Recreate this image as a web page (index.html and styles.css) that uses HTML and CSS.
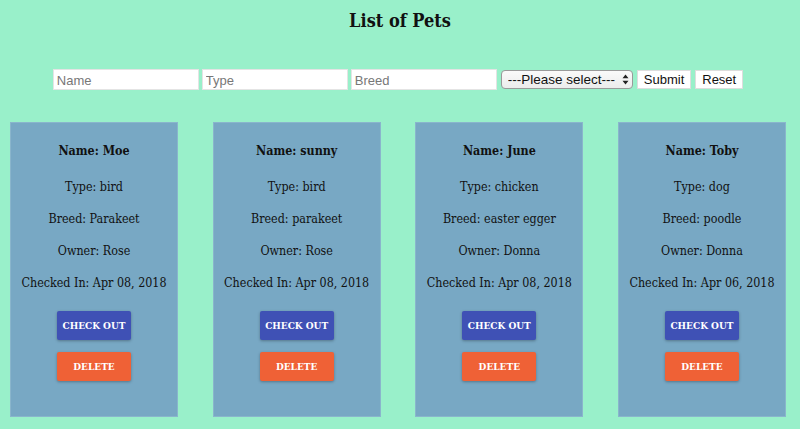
FILE: index.html
```html
<!DOCTYPE html>
<html>
<head>
<meta charset="utf-8">
<link rel="stylesheet" href="styles.css">
</head>
<body>
<h1 class="title">List of Pets</h1>
<form class="pet-form">
  <input class="field" type="text" placeholder="Name">
  <input class="field" type="text" placeholder="Type">
  <input class="field" type="text" placeholder="Breed">
  <span class="select-wrap">
    <select class="owner-select"><option>---Please select---</option></select>
    <svg class="select-arrows" width="7" height="11" viewBox="0 0 7 11"><path d="M3.5 0.5 L6.5 4.2 H0.5 Z M3.5 10.5 L6.5 6.8 H0.5 Z" fill="#222"/></svg>
  </span>
  <button class="form-btn" type="button">Submit</button>
  <button class="form-btn" type="button">Reset</button>
</form>
<div class="cards">
  <div class="card">
    <p class="name">Name: Moe</p>
    <p class="line">Type: bird</p>
    <p class="line">Breed: Parakeet</p>
    <p class="line">Owner: Rose</p>
    <p class="line">Checked In: Apr 08, 2018</p>
    <button class="btn checkout">CHECK OUT</button>
    <button class="btn delete">DELETE</button>
  </div>
  <div class="card">
    <p class="name">Name: sunny</p>
    <p class="line">Type: bird</p>
    <p class="line">Breed: parakeet</p>
    <p class="line">Owner: Rose</p>
    <p class="line">Checked In: Apr 08, 2018</p>
    <button class="btn checkout">CHECK OUT</button>
    <button class="btn delete">DELETE</button>
  </div>
  <div class="card">
    <p class="name">Name: June</p>
    <p class="line">Type: chicken</p>
    <p class="line">Breed: easter egger</p>
    <p class="line">Owner: Donna</p>
    <p class="line">Checked In: Apr 08, 2018</p>
    <button class="btn checkout">CHECK OUT</button>
    <button class="btn delete">DELETE</button>
  </div>
  <div class="card">
    <p class="name">Name: Toby</p>
    <p class="line">Type: dog</p>
    <p class="line">Breed: poodle</p>
    <p class="line">Owner: Donna</p>
    <p class="line">Checked In: Apr 06, 2018</p>
    <button class="btn checkout">CHECK OUT</button>
    <button class="btn delete">DELETE</button>
  </div>
</div>
</body>
</html>
```
FILE: styles.css
```css
html, body {
  margin: 0;
  padding: 0;
  background: #99f0ca;
  font-family: "DejaVu Serif Condensed", "DejaVu Serif", serif;
  color: #111;
}
.title {
  margin: 0;
  padding-top: 10px;
  height: 69px;
  box-sizing: border-box;
  text-align: center;
  font-size: 18px;
  line-height: 22px;
  font-weight: bold;
}
.pet-form {
  display: flex;
  justify-content: center;
  align-items: center;
  gap: 3px;
  height: 21px;
  margin-left: -4px;
  font-family: "Liberation Sans", Arial, sans-serif;
}
.field {
  width: 146px;
  height: 21px;
  box-sizing: border-box;
  border: 1px solid #e4e4e4;
  background: #fff;
  padding: 2px 3px 0;
  font-family: "Liberation Sans", Arial, sans-serif;
  font-size: 13px;
  color: #333;
}
.field::placeholder { color: #777; }
.select-wrap {
  position: relative;
  display: flex;
  margin-left: 1px;
}
.owner-select {
  appearance: none;
  -webkit-appearance: none;
  width: 132px;
  height: 19px;
  box-sizing: border-box;
  border: 1px solid #9a9a9a;
  border-radius: 4px;
  background: linear-gradient(#fafafa, #ececec);
  font-family: "Liberation Sans", Arial, sans-serif;
  font-size: 13.5px;
  color: #111;
  padding: 0 0 0 6px;
}
.select-arrows {
  position: absolute;
  right: 4px;
  top: 4px;
  pointer-events: none;
}
.form-btn {
  height: 19px;
  box-sizing: border-box;
  border: 1px solid #ddd;
  background: #fff;
  font-family: "Liberation Sans", Arial, sans-serif;
  font-size: 13px;
  color: #111;
  padding: 0 6px;
  margin-left: 1px;
}
.cards {
  display: flex;
  justify-content: space-between;
  margin: 32px 14px 0 10px;
}
.card {
  width: 168px;
  height: 295px;
  box-sizing: border-box;
  background: #78a8c4;
  border: 1px solid #8ab5cc;
  display: flex;
  flex-direction: column;
  align-items: center;
  padding-top: 20px;
}
.card p {
  margin: 0;
  font-size: 12.4px;
  line-height: 16px;
  height: 32px;
  white-space: nowrap;
}
.card .name {
  font-weight: bold;
  height: 36px;
}
.btn {
  width: 74px;
  height: 29px;
  border: none;
  border-radius: 2px;
  color: #fff;
  font-family: "DejaVu Serif Condensed", "DejaVu Serif", serif;
  font-weight: bold;
  font-size: 10px;
  box-shadow: 0 1px 3px rgba(0,0,0,0.3);
  padding: 0;
}
.checkout {
  background: #3f51b5;
  margin-top: 4px;
}
.delete {
  background: #ef6136;
  margin-top: 12px;
}
```
